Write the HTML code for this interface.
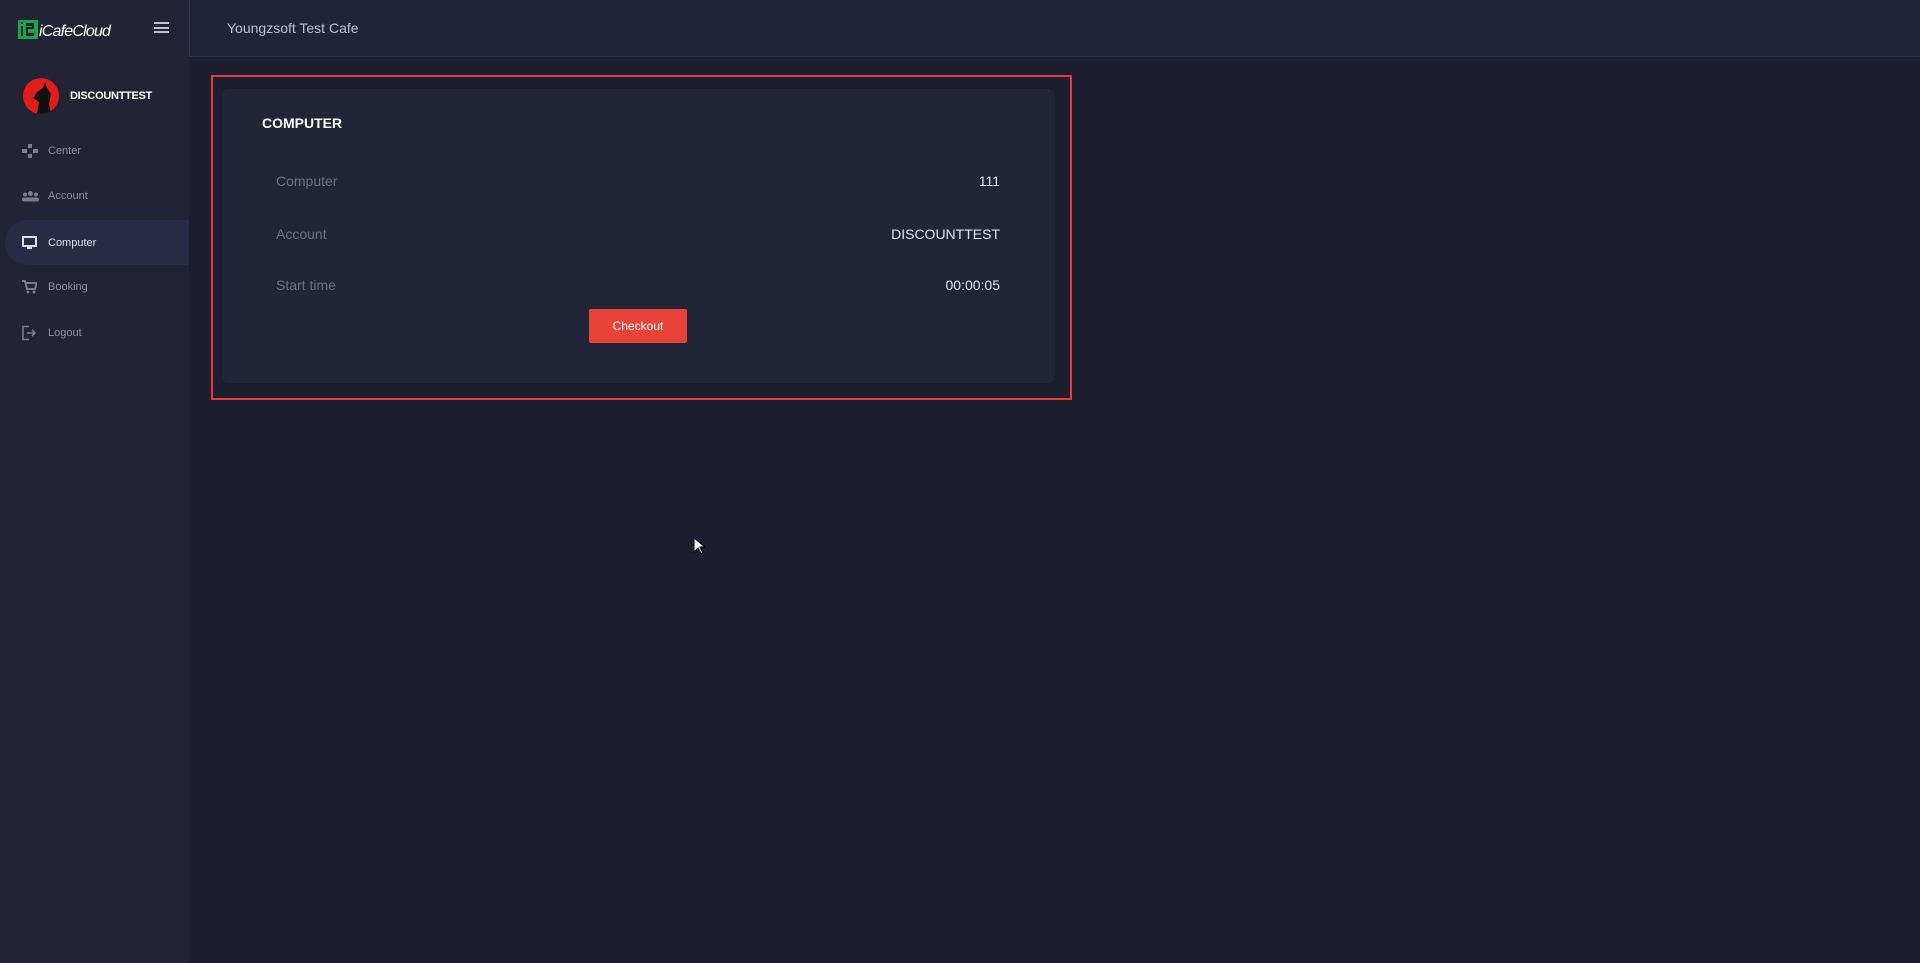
<!DOCTYPE html>
<html><head><meta charset="utf-8"><style>
*{margin:0;padding:0;box-sizing:border-box}
body{width:1920px;height:963px;background:#1c1d2e;font-family:"Liberation Sans",sans-serif;position:relative;overflow:hidden}
.side{position:absolute;left:0;top:0;width:189px;height:963px;background:#222435}
.hdr{position:absolute;left:189px;top:0;right:0;height:57px;background:#21233a;border-bottom:1px solid #2e3148;border-left:1px solid #2e3148}
.hdr span{position:absolute;left:37px;top:20px;font-size:14px;color:#bfc1cc}
.logo{position:absolute;left:18px;top:20px;font-size:16px;color:#fff;letter-spacing:-0.8px;font-style:italic}
.ham{position:absolute;left:154px;top:22px;width:15px;height:11px;border-top:2px solid #bfc1cc;border-bottom:2px solid #bfc1cc}
.ham:after{content:"";position:absolute;left:0;top:2.5px;width:15px;height:2px;background:#bfc1cc}
.av{position:absolute;left:23px;top:78px;width:36px;height:36px;border-radius:50%;background:#e31b1b;overflow:hidden}
.uname{position:absolute;left:70px;top:90px;font-size:11px;font-weight:bold;color:#fff;letter-spacing:-0.3px}
.nav{position:absolute;left:0;width:189px;height:45px;font-size:11px;color:#8c8fa3}
.nav .t{position:absolute;left:48px;top:50%;transform:translateY(-50%)}
.nav svg{position:absolute;left:22px;top:50%;transform:translateY(-50%)}
.nav.act{left:5px;width:184px;background:#282b44;border-radius:22px 0 0 22px;color:#dfe1ea}
.nav.act .t{left:43px}.nav.act svg{left:17px}
.box{position:absolute;left:211px;top:75px;width:861px;height:325px;border:2px solid #e8393c}
.card{position:absolute;left:222px;top:89px;width:833px;height:294px;background:#222437;border-radius:6px}
.ttl{position:absolute;left:40px;top:26px;font-size:14px;font-weight:bold;color:#fff}
.row{position:absolute;left:54px;width:724px;font-size:14px}
.row .l{color:#6d7083}.row .v{position:absolute;right:0;top:0;color:#e1e3ee}
.btn{position:absolute;left:367px;top:220px;width:98px;height:34px;background:#e84337;border-radius:2px;color:#fff;font-size:12px;text-align:center;line-height:34px}
</style></head><body>
<div class="side">
 <div class="logo"><svg width="20" height="19" style="vertical-align:-3px;margin-right:1px"><rect x="0" y="0" width="20" height="19" fill="#1fa347"/><rect x="3" y="6" width="2" height="10" fill="#222435"/><rect x="3" y="2" width="2" height="2" fill="#222435"/><path d="M8 3h8v6h-6v4h6v3h-8v-9h6v-1h-6z" fill="#222435"/></svg>iCafeCloud</div>
 <div class="ham"></div>
 <div class="av"><svg width="36" height="36"><path d="M14 36 L16 24 L10 20 L14 14 L20 10 L22 4 L24 10 L28 16 L26 26 L28 36Z" fill="#111"/></svg></div>
 <div class="uname">DISCOUNTTEST</div>
 <div class="nav" style="top:128px"><svg width="16" height="14"><rect x="6" y="0" width="4" height="4" fill="#7a7d92"/><rect x="0" y="5" width="5" height="4" fill="#7a7d92"/><rect x="11" y="5" width="5" height="4" fill="#7a7d92"/><rect x="6" y="10" width="4" height="4" fill="#7a7d92"/></svg><span class="t">Center</span></div>
 <div class="nav" style="top:173px"><svg width="17" height="11"><circle cx="8.5" cy="3" r="2.5" fill="#7a7d92"/><circle cx="3" cy="4" r="2" fill="#7a7d92"/><circle cx="14" cy="4" r="2" fill="#7a7d92"/><rect x="0" y="7" width="17" height="4" rx="2" fill="#7a7d92"/></svg><span class="t">Account</span></div>
 <div class="nav act" style="top:220px"><svg width="15" height="14"><rect x="1" y="1" width="13" height="9" fill="none" stroke="#dfe1ea" stroke-width="2"/><rect x="5" y="11" width="5" height="2" fill="#dfe1ea"/></svg><span class="t">Computer</span></div>
 <div class="nav" style="top:264px"><svg width="15" height="14"><path d="M0 1h3l2 8h8l2-6H4" fill="none" stroke="#7a7d92" stroke-width="2"/><circle cx="6" cy="12" r="1.5" fill="#7a7d92"/><circle cx="12" cy="12" r="1.5" fill="#7a7d92"/></svg><span class="t">Booking</span></div>
 <div class="nav" style="top:310px"><svg width="14" height="15"><path d="M7 1H1v13h6" fill="none" stroke="#7a7d92" stroke-width="1.6"/><path d="M5 7.5h8M10 4.5l3 3-3 3" fill="none" stroke="#7a7d92" stroke-width="1.6"/></svg><span class="t">Logout</span></div>
</div>
<div class="hdr"><span>Youngzsoft Test Cafe</span></div>
<div class="box"></div>
<div class="card">
 <div class="ttl">COMPUTER</div>
 <div class="row" style="top:84px"><span class="l">Computer</span><span class="v">111</span></div>
 <div class="row" style="top:137px"><span class="l">Account</span><span class="v">DISCOUNTTEST</span></div>
 <div class="row" style="top:188px"><span class="l">Start time</span><span class="v">00:00:05</span></div>
 <div class="btn">Checkout</div>
</div>
<svg style="position:absolute;left:693px;top:537px" width="12" height="18"><path d="M1 1v14l4-4 3 6 2-1-3-6h5z" fill="#fff" stroke="#000" stroke-width="1"/></svg>
</body></html>
